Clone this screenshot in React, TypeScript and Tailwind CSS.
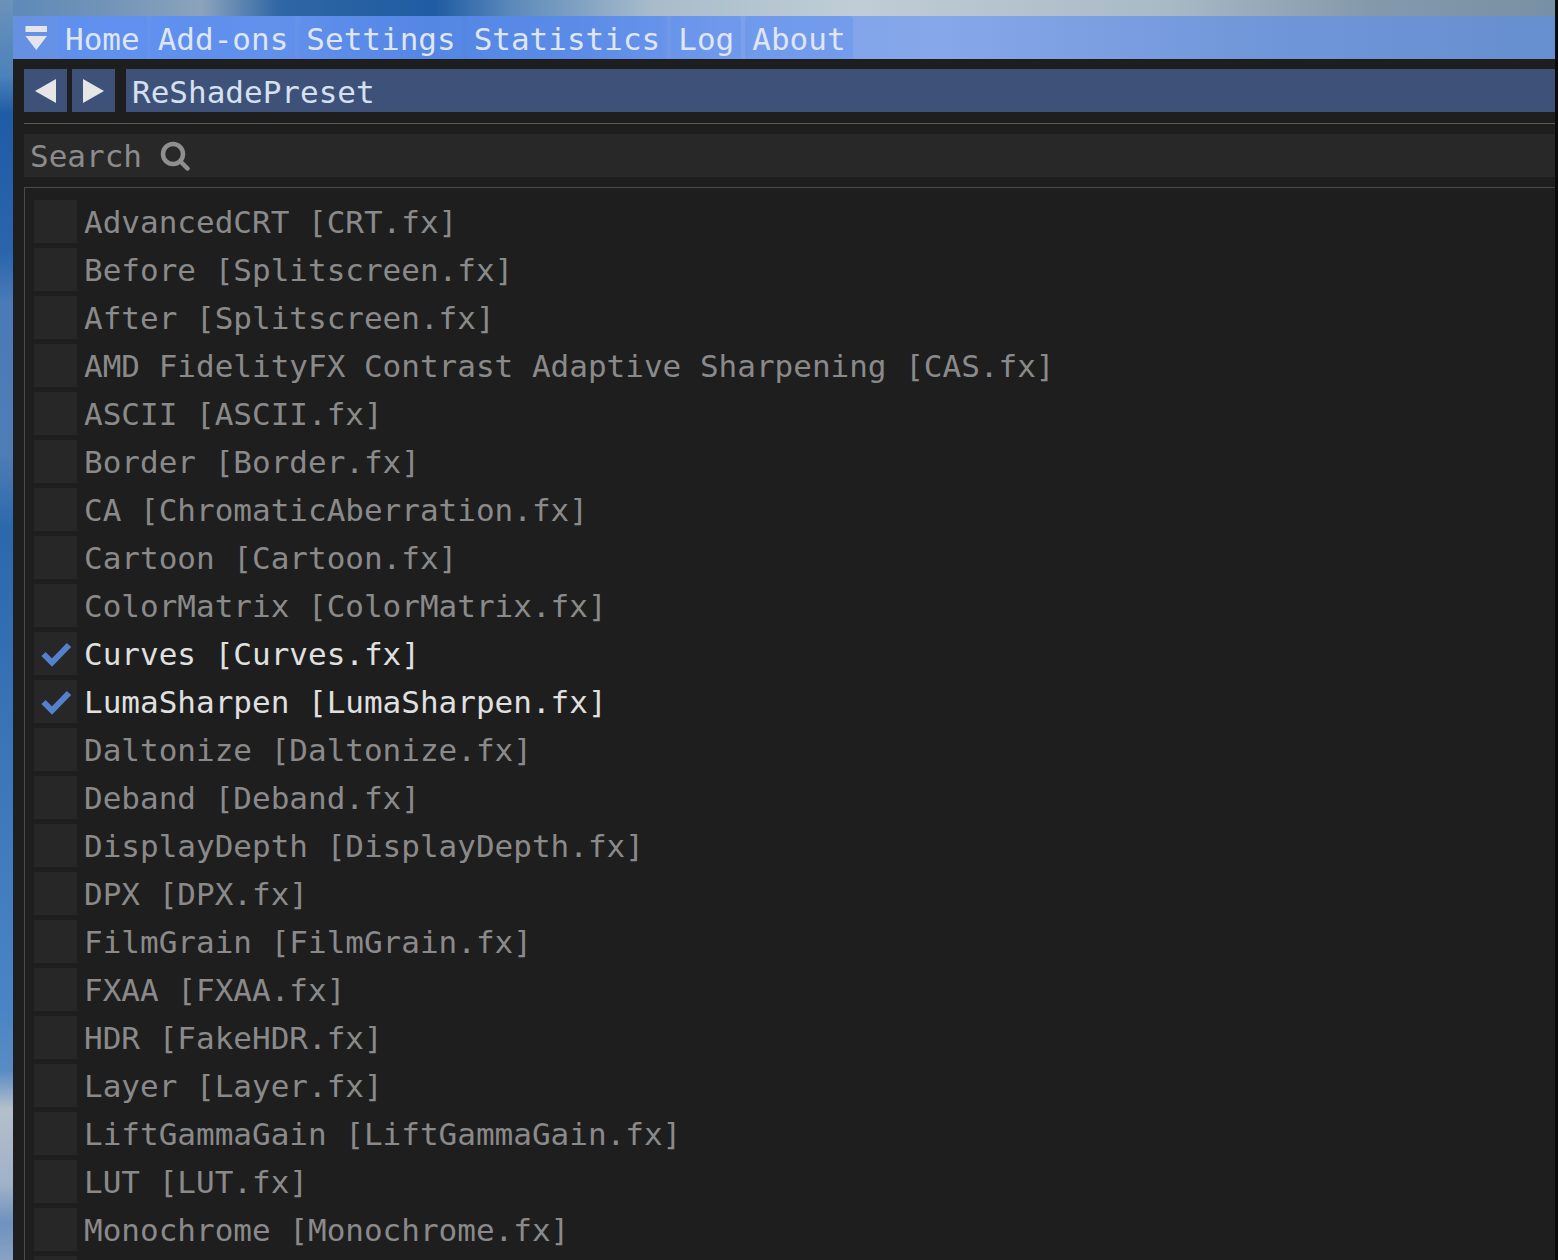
import React from 'react';

interface Technique {
  name: string;
  file: string;
  enabled?: boolean;
}

const TABS = ['Home', 'Add-ons', 'Settings', 'Statistics', 'Log', 'About'];

const TECHNIQUES: Technique[] = [
  { name: 'AdvancedCRT', file: 'CRT.fx' },
  { name: 'Before', file: 'Splitscreen.fx' },
  { name: 'After', file: 'Splitscreen.fx' },
  { name: 'AMD FidelityFX Contrast Adaptive Sharpening', file: 'CAS.fx' },
  { name: 'ASCII', file: 'ASCII.fx' },
  { name: 'Border', file: 'Border.fx' },
  { name: 'CA', file: 'ChromaticAberration.fx' },
  { name: 'Cartoon', file: 'Cartoon.fx' },
  { name: 'ColorMatrix', file: 'ColorMatrix.fx' },
  { name: 'Curves', file: 'Curves.fx', enabled: true },
  { name: 'LumaSharpen', file: 'LumaSharpen.fx', enabled: true },
  { name: 'Daltonize', file: 'Daltonize.fx' },
  { name: 'Deband', file: 'Deband.fx' },
  { name: 'DisplayDepth', file: 'DisplayDepth.fx' },
  { name: 'DPX', file: 'DPX.fx' },
  { name: 'FilmGrain', file: 'FilmGrain.fx' },
  { name: 'FXAA', file: 'FXAA.fx' },
  { name: 'HDR', file: 'FakeHDR.fx' },
  { name: 'Layer', file: 'Layer.fx' },
  { name: 'LiftGammaGain', file: 'LiftGammaGain.fx' },
  { name: 'LUT', file: 'LUT.fx' },
  { name: 'Monochrome', file: 'Monochrome.fx' },
];

const MenuBar: React.FC = () => (
  <nav className="flex h-[43px] items-stretch bg-[linear-gradient(90deg,#6690e0_0%,#6494f0_6%,#6692ea_18%,#5283de_27%,#5b8ae2_36%,#7ba0ea_46%,#86a8ea_60%,#7c9fe2_70%,#6f96d8_82%,#668fd0_100%)] pr-4 pl-[11px]">
    <button type="button" aria-label="Collapse" className="mr-1 flex w-[30px] items-center">
      <svg viewBox="0 0 24 26" className="h-[26px] w-6" fill="#e4e4ec">
        <path d="M1.500 1h21.500v6H1.500zM1.500 11h21.500L12.250 25z" />
      </svg>
    </button>
    <div className="flex gap-1">
      {TABS.map((tab) => (
        <button
          key={tab}
          type="button"
          className="rounded-t-sm bg-[#5a8cf0]/35 px-[7px] pt-[2px] text-[#dfe5f2]"
        >
          {tab}
        </button>
      ))}
    </div>
  </nav>
);

const PresetBar: React.FC = () => (
  <div className="flex h-[43px] text-[#d5e0f0]">
    <button type="button" aria-label="Previous preset" className="mr-[5px] flex w-[43px] items-center justify-center bg-[#3e5279]">
      <svg viewBox="0 0 22 24" className="h-6 w-[22px]" fill="#e6e6e6">
        <path d="M21 0v24L0 12z" />
      </svg>
    </button>
    <button type="button" aria-label="Next preset" className="mr-[11px] flex w-[43px] items-center justify-center bg-[#3e5279]">
      <svg viewBox="0 0 22 24" className="h-6 w-[22px]" fill="#e6e6e6">
        <path d="M0 0v24l21-12z" />
      </svg>
    </button>
    <button type="button" className="flex-1 bg-[#3e5279] px-[6px] pt-[2px] text-left">
      ReShadePreset
    </button>
  </div>
);

const SearchBox: React.FC = () => (
  <div className="relative flex h-[43px] items-center bg-[#282828]">
    <input
      type="text"
      aria-label="Search"
      placeholder="Search"
      className="h-full w-full bg-transparent px-[6px] text-[#8c8c8c] outline-none placeholder:text-[#8c8c8c]"
    />
    <svg
      viewBox="0 0 30 30"
      className="pointer-events-none absolute left-[136px] h-[30px] w-[30px]"
      fill="none"
      stroke="#8f8f8f"
      strokeWidth="4.500"
      strokeLinecap="round"
    >
      <circle cx="13" cy="13" r="10" />
      <path d="M20.500 20.500l7 7" />
    </svg>
  </div>
);

const TechniqueRow: React.FC<{ technique: Technique }> = ({ technique }) => {
  const { name, file, enabled } = technique;

  return (
    <label className={`flex h-[43px] shrink-0 items-center ${enabled ? 'text-[#e0e0e0]' : 'text-[#8a8a8a]'}`}>
      <span className="relative mr-[7px] h-[43px] w-[43px] shrink-0">
        <input
          type="checkbox"
          defaultChecked={enabled}
          className="peer block h-full w-full appearance-none bg-[#272727]"
        />
        <svg
          viewBox="0 0 43 43"
          className="pointer-events-none absolute inset-0 hidden peer-checked:block"
          fill="none"
          stroke="#5480cc"
          strokeWidth="6"
        >
          <path d="M9.500 22l8.500 8.500L35 13" />
        </svg>
      </span>
      <span className="whitespace-pre">{`${name} [${file}]`}</span>
    </label>
  );
};

const App: React.FC = () => {
  return (
    <div className="h-screen overflow-hidden border-r-[3px] border-[#0a0a0a] bg-[linear-gradient(90deg,#5b89b8_0%,#6f92b8_6%,#8ba3bd_13%,#2f66a4_18%,#1f5ca2_28%,#5d8abb_33%,#a9bccb_42%,#c0cdd6_55%,#a9b9c6_75%,#8499ac_88%,#7890a5_100%)] font-['DejaVu_Sans_Mono',monospace] text-[31px] leading-[40px]">
      <div className="flex h-full bg-[linear-gradient(180deg,#6b92ba_0%,#4c82ba_6%,#1f5ca6_9%,#2a65ac_20%,#4a7ab8_24%,#4f7db6_36%,#2b68ac_42%,#3a76b8_60%,#4a84c4_80%,#5a8cc4_85%,#b4bfca_88%,#9fb2c8_94%,#6f92bf_97%,#88a2c4_100%)] bg-[length:13px_100%] bg-no-repeat pt-4 pl-[13px]">
        <main className="flex min-w-0 flex-1 flex-col bg-[#1e1e1e]">
          <MenuBar />
          <div className="flex min-h-0 flex-1 flex-col pt-[10px] pl-[11px]">
            <PresetBar />
            <hr className="mt-[11px] mb-[10px] border-t border-[#5a5a5a]" />
            <SearchBox />
            <div className="mt-[10px] flex min-h-0 flex-1 flex-col gap-[5px] overflow-hidden border-t border-l border-[#4a4a4a] pt-3 pl-[9px]">
              {TECHNIQUES.map((technique) => (
                <TechniqueRow key={technique.name} technique={technique} />
              ))}
              {/* edge of the next row, cut off by the window */}
              <span className="h-[43px] w-[43px] shrink-0 bg-[#272727]" />
            </div>
          </div>
        </main>
      </div>
    </div>
  );
};

export default App;
